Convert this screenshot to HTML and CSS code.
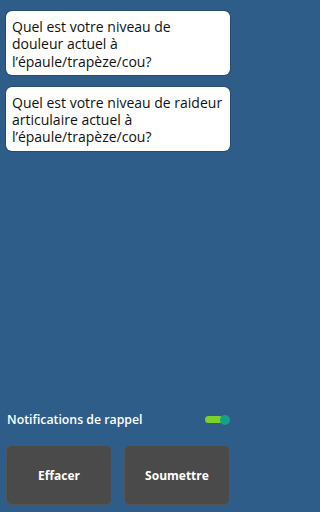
FILE: index.html
```html
<!DOCTYPE html>
<html lang="fr">
<head>
<meta charset="utf-8">
<link rel="stylesheet" href="styles.css">
</head>
<body>
<div class="app">
  <div class="questions">
    <div class="card">Quel est votre niveau de<br>douleur actuel à l’épaule/trapèze/cou?</div>
    <div class="card">Quel est votre niveau de raideur articulaire actuel à l’épaule/trapèze/cou?</div>
  </div>
  <div class="footer">
    <div class="notif">
      <span class="notif-label">Notifications de rappel</span>
      <span class="toggle"><span class="track"></span><span class="thumb"></span></span>
    </div>
    <div class="buttons">
      <button class="btn">Effacer</button>
      <button class="btn">Soumettre</button>
    </div>
  </div>
</div>
</body>
</html>
```
FILE: styles.css
```css
html, body {
  margin: 0;
  padding: 0;
  height: 100%;
  background: #2e5d8a;
}
.app {
  width: 236px;
  height: 512px;
  display: flex;
  flex-direction: column;
  justify-content: space-between;
  padding: 11px 6px 7px 6px;
  box-sizing: border-box;
  font-family: "Open Sans", "Noto Sans", sans-serif;
}
.questions {
  display: flex;
  flex-direction: column;
  gap: 12px;
}
.card {
  background: #ffffff;
  border-radius: 6px;
  padding: 7px 4px 5px 6px;
  font-size: 14px;
  line-height: 17.3px;
  color: #111;
  box-shadow: 0 0 0 1px #264c72;
}
.footer {
  display: flex;
  flex-direction: column;
  gap: 17px;
}
.notif {
  display: flex;
  align-items: center;
  justify-content: space-between;
  padding-left: 1px;
}
.notif-label {
  color: #ffffff;
  font-weight: 600;
  font-size: 12.3px;
}
.toggle {
  position: relative;
  width: 25px;
  height: 10px;
  display: inline-block;
}
.track {
  position: absolute;
  left: 0;
  top: 1.5px;
  width: 18px;
  height: 7px;
  border-radius: 4px;
  background: #7dd228;
}
.thumb {
  position: absolute;
  right: 0;
  top: 0;
  width: 10px;
  height: 10px;
  border-radius: 50%;
  background: #14a08c;
}
.buttons {
  display: grid;
  grid-template-columns: 1fr 1fr;
  gap: 12px;
}
.btn {
  height: 60px;
  background: #4a4a4a;
  border: 1px solid #555;
  border-radius: 6px;
  color: #ffffff;
  font-family: "Open Sans", "Noto Sans", sans-serif;
  font-weight: 700;
  font-size: 12px;
}
```
